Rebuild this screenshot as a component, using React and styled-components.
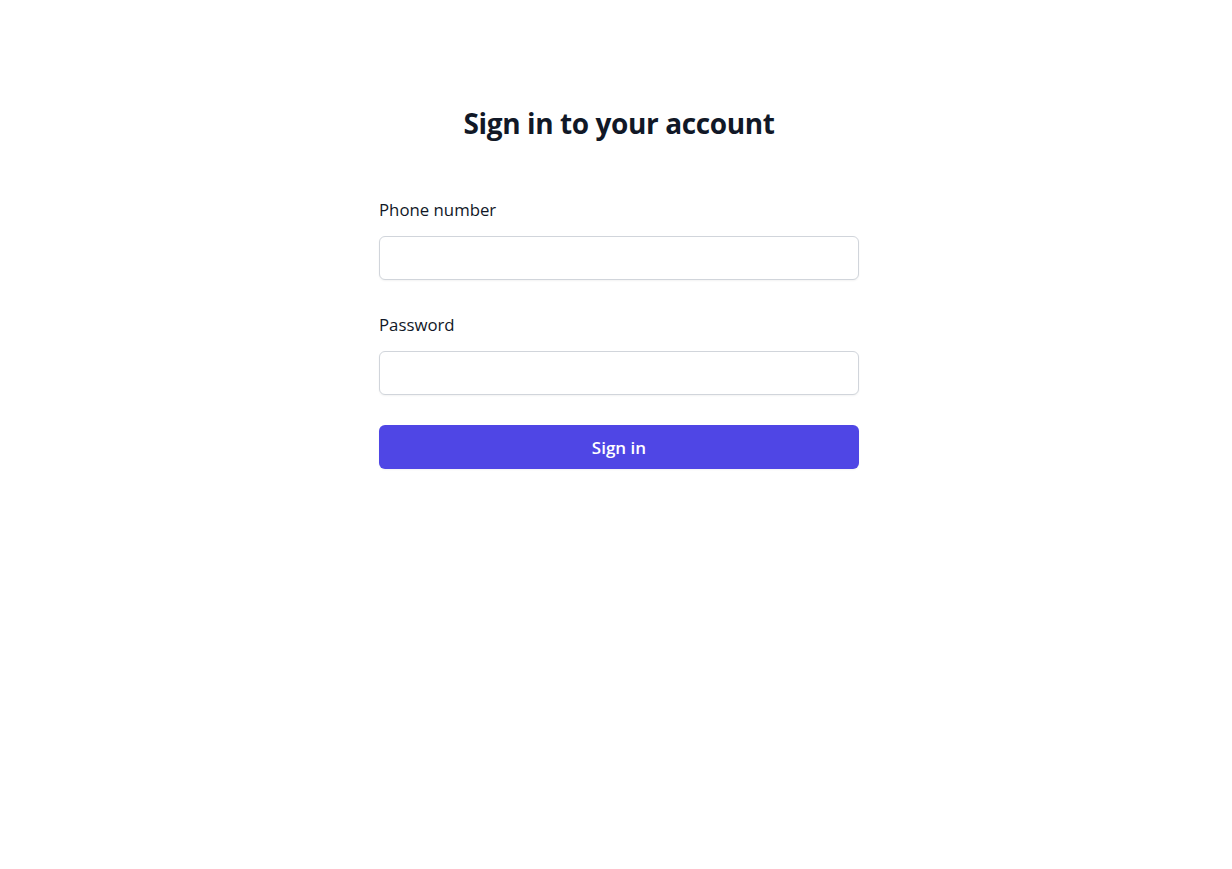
import React from "react"
import styled, { createGlobalStyle } from "styled-components"

const GlobalStyle = createGlobalStyle`
  html, body {
    margin: 0;
    padding: 0;
    background: #ffffff;
  }
  body {
    font-family: "Open Sans", "Noto Sans", "Liberation Sans", sans-serif;
    color: #111827;
  }
  * {
    box-sizing: border-box;
  }
`

const Page = styled.div`
  min-height: 100vh;
  display: flex;
  flex-direction: column;
  align-items: center;
  padding: 105px 0 0 6px;
`

const Title = styled.h2`
  margin: 0;
  font-size: 28px;
  line-height: 36px;
  font-weight: 700;
  letter-spacing: -0.4px;
  color: #111827;
  text-align: center;
`

const Form = styled.form`
  width: 480px;
  margin-top: 57px;
  display: flex;
  flex-direction: column;
`

const Field = styled.div`
  display: flex;
  flex-direction: column;
  margin-bottom: ${p => p.$gap || 0}px;
`

const Label = styled.label`
  font-size: 16.8px;
  line-height: 24px;
  font-weight: 500;
  color: #111827;
  margin-bottom: 14px;
`

const Input = styled.input`
  height: 44px;
  width: 100%;
  border: 1px solid #d1d5db;
  border-radius: 6px;
  padding: 0 12px;
  font-size: 16px;
  font-family: inherit;
  color: #111827;
  background: #fff;
  box-shadow: 0 1px 2px rgba(0, 0, 0, 0.05);
  outline: none;
`

const Button = styled.button`
  height: 44px;
  width: 100%;
  border: none;
  border-radius: 6px;
  background: #4f46e5;
  color: #ffffff;
  font-family: inherit;
  font-size: 17px;
  font-weight: 600;
  cursor: pointer;
  box-shadow: 0 1px 2px rgba(0, 0, 0, 0.05);
`

export default function App() {
  return (
    <>
      <GlobalStyle />
      <Page>
        <Title>Sign in to your account</Title>
        <Form onSubmit={e => e.preventDefault()}>
          <Field $gap={33}>
            <Label htmlFor="phone">Phone number</Label>
            <Input id="phone" type="tel" />
          </Field>
          <Field $gap={30}>
            <Label htmlFor="password">Password</Label>
            <Input id="password" type="password" />
          </Field>
          <Button type="submit">Sign in</Button>
        </Form>
      </Page>
    </>
  )
}
